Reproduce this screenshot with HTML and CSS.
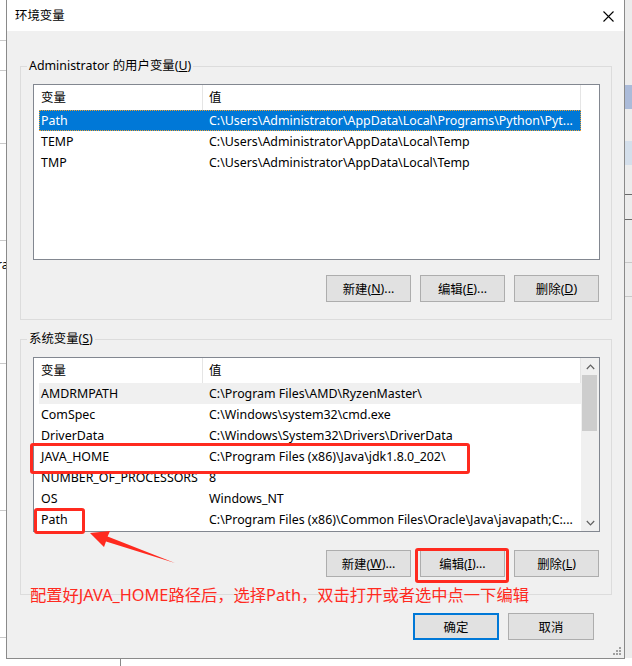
FILE: index.html
```html
<!DOCTYPE html>
<html lang="zh-CN">
<head>
<meta charset="utf-8">
<title>环境变量</title>
<link rel="stylesheet" href="styles.css">
</head>
<body>
<div class="screen">
  <div class="behind-left">
    <i class="hl" style="top:40px"></i>
    <i class="hl" style="top:70px"></i>
    <i class="hl" style="top:143px"></i>
    <i class="hl" style="top:240px"></i>
    <span class="ra">ra</span>
    <i class="hl" style="top:363px"></i>
    <i class="hl" style="top:510px"></i>
    <i class="hl" style="top:637px"></i>
  </div>
  <div class="behind-right">
    <i class="blk1"></i>
    <i class="blk2"></i>
    <i class="rl" style="top:194px"></i>
    <i class="rl" style="top:219px"></i>
    <i class="rl light" style="top:262px"></i>
    <i class="rl light" style="top:296px"></i>
  </div>
  <div class="behind-bottom"><i class="vl"></i></div>

  <div class="dialog">
    <div class="titlebar">
      <span class="title">环境变量</span>
      <svg class="close" width="11" height="11" viewBox="0 0 11 11"><path d="M0.5 0.5 L10.5 10.5 M10.5 0.5 L0.5 10.5" stroke="#000" stroke-width="1.1" fill="none"/></svg>
    </div>
    <div class="body">
      <fieldset class="group">
        <legend>Administrator 的用户变量(<u>U</u>)</legend>
        <div class="list">
          <div class="list-main">
            <div class="list-head"><div class="hcol c1">变量</div><div class="hcol c2">值</div></div>
            <div class="rows">
              <div class="row sel"><span class="c1">Path</span><span class="c2">C:\Users\Administrator\AppData\Local\Programs\Python\Pyt...</span></div>
              <div class="row"><span class="c1">TEMP</span><span class="c2">C:\Users\Administrator\AppData\Local\Temp</span></div>
              <div class="row"><span class="c1">TMP</span><span class="c2">C:\Users\Administrator\AppData\Local\Temp</span></div>
            </div>
          </div>
        </div>
        <div class="btns">
          <button class="btn">新建(<u>N</u>)...</button>
          <button class="btn">编辑(<u>E</u>)...</button>
          <button class="btn">删除(<u>D</u>)</button>
        </div>
      </fieldset>

      <fieldset class="group group-sys">
        <legend>系统变量(<u>S</u>)</legend>
        <div class="list list-sys">
          <div class="list-main">
            <div class="list-head"><div class="hcol c1">变量</div><div class="hcol c2">值</div></div>
            <div class="rows">
              <div class="row dim"><span class="c1">AMDRMPATH</span><span class="c2">C:\Program Files\AMD\RyzenMaster\</span></div>
              <div class="row"><span class="c1">ComSpec</span><span class="c2">C:\Windows\system32\cmd.exe</span></div>
              <div class="row"><span class="c1">DriverData</span><span class="c2">C:\Windows\System32\Drivers\DriverData</span></div>
              <div class="row"><span class="c1">JAVA_HOME</span><span class="c2">C:\Program Files (x86)\Java\jdk1.8.0_202\</span></div>
              <div class="row"><span class="c1">NUMBER_OF_PROCESSORS</span><span class="c2">8</span></div>
              <div class="row"><span class="c1">OS</span><span class="c2">Windows_NT</span></div>
              <div class="row"><span class="c1">Path</span><span class="c2">C:\Program Files (x86)\Common Files\Oracle\Java\javapath;C:...</span></div>
            </div>
          </div>
          <div class="scroll">
            <div class="arrow"><svg width="9" height="6" viewBox="0 0 9 6"><path d="M0.8 5 L4.5 1.2 L8.2 5" stroke="#606060" stroke-width="1.2" fill="none"/></svg></div>
            <div class="thumb"></div>
            <div class="track"></div>
            <div class="arrow"><svg width="9" height="6" viewBox="0 0 9 6"><path d="M0.8 1 L4.5 4.8 L8.2 1" stroke="#606060" stroke-width="1.2" fill="none"/></svg></div>
          </div>
        </div>
        <div class="btns btns-sys">
          <button class="btn">新建(<u>W</u>)...</button>
          <button class="btn">编辑(<u>I</u>)...</button>
          <button class="btn">删除(<u>L</u>)</button>
        </div>
      </fieldset>

      <div class="footer">
        <button class="btn btn-wide btn-default">确定</button>
        <button class="btn btn-wide">取消</button>
      </div>
    </div>
    <div class="grip">
      <svg width="8" height="8" viewBox="0 0 8 8" fill="#a0a0a0"><rect x="6" y="0" width="2" height="2"/><rect x="3" y="3" width="2" height="2"/><rect x="6" y="3" width="2" height="2"/><rect x="0" y="6" width="2" height="2"/><rect x="3" y="6" width="2" height="2"/><rect x="6" y="6" width="2" height="2"/></svg>
    </div>
  </div>

  <div class="mark mark-java"></div>
  <div class="mark mark-path"></div>
  <div class="mark mark-edit"></div>
  <svg class="arrow-mark" width="100" height="40" viewBox="85 528 100 40">
    <polygon points="90,533 110,531 107.6,536.6 175,563 106,541.4 104,547" fill="#ff2a1f"/>
  </svg>
  <div class="note">配置好JAVA_HOME路径后，选择Path，双击打开或者选中点一下编辑</div>
</div>
</body>
</html>
```

FILE: styles.css
```css
* { box-sizing: border-box; }
html, body { margin: 0; padding: 0; }
body {
  width: 632px;
  height: 666px;
  overflow: hidden;
  background: #ffffff;
  font-family: "Noto Sans", "Noto Sans CJK SC", sans-serif;
  font-size: 12.4px;
  color: #000;
}
.screen { position: relative; width: 632px; height: 666px; overflow: hidden; }

/* window behind the dialog */
.behind-left { position: absolute; left: 0; top: 0; width: 7px; height: 666px; background: #fff; }
.behind-left .hl { position: absolute; left: 0; width: 7px; height: 1px; background: #c9c9c9; }
.behind-left .ra { position: absolute; left: -3px; top: 257px; font-size: 12px; line-height: 16px; }
.behind-right { position: absolute; right: 0; top: 0; width: 8px; height: 666px; background: #ececec; }
.behind-right .blk1 { position: absolute; left: 0; top: 85px; width: 8px; height: 24px; background: #abbbd9; }
.behind-right .blk2 { position: absolute; left: 0; top: 141px; width: 8px; height: 24px; background: #d4dfeb; }
.behind-right .rl { position: absolute; left: 0; width: 8px; height: 1px; background: #6a6a6a; }
.behind-right .rl.light { background: #c8c8c8; }
.behind-bottom { position: absolute; left: 0; bottom: 0; width: 632px; height: 8px; background: #fff; }
.behind-bottom .vl { position: absolute; left: 120px; top: 0; width: 1px; height: 8px; background: #888; }

/* dialog */
.dialog {
  position: relative;
  z-index: 1;
  margin-left: 6px;
  width: 619px;
  height: 659px;
  border: 1px solid #8a8a8a;
  border-top: none;
  background: #f0f0f0;
  display: flex;
  flex-direction: column;
}
.titlebar {
  height: 31px;
  flex: none;
  background: #fff;
  display: flex;
  align-items: center;
  justify-content: space-between;
  padding: 0 10px 0 8px;
}
.title { font-size: 12.4px; line-height: 16px; }
.close { display: block; margin-top: 1px; }

.body { padding: 27px 12px 0 13px; display: flex; flex-direction: column; }

.group {
  margin: 0;
  padding: 10px 11px 17px 12px;
  border: 1px solid #dcdcdc;
  min-width: 0;
}
.group legend {
  margin-left: -6px;
  padding: 0 2px;
  font-size: 12.4px;
  line-height: 16px;
}
.group-sys { margin-top: 11px; }

.list {
  height: 176px;
  border: 1px solid #828790;
  background: #fff;
  display: flex;
}
.list-sys { height: 175px; }
.list-main { width: 547px; flex: none; }

.list-head { display: flex; height: 25px; }
.hcol { line-height: 25px; border-right: 1px solid #e5e5e5; white-space: nowrap; }
.hcol.c1 { width: 169px; padding-left: 7px; }
.hcol.c2 { flex: 1; padding-left: 6px; }

.rows { padding-left: 5px; }
.row {
  display: flex;
  width: 542px;
  height: 21px;
  line-height: 21px;
  white-space: nowrap;
  overflow: hidden;
}
.row .c1 { width: 168px; padding-left: 2px; flex: none; overflow: hidden; }
.row .c2 { padding-left: 2px; overflow: hidden; }
.row.sel { background: #0078d7; color: #fff; outline: 1px dotted #f0a030; outline-offset: -1px; }
.row.dim { background: #f0f0f0; }

.scroll { width: 18px; flex: none; background: #f0f0f0; display: flex; flex-direction: column; padding: 0 1px 0 1px; }
.scroll .arrow { height: 17px; display: flex; align-items: center; justify-content: center; }
.scroll .thumb { height: 56px; background: #cdcdcd; margin: 0 1px 0 0; }
.scroll .track { flex: 1; }

.btns { display: flex; justify-content: flex-end; gap: 9px; margin-top: 15px; padding-right: 1px; }
.btns-sys { margin-top: 18px; }
.btn {
  width: 85px;
  height: 27px;
  margin: 0;
  padding: 0;
  background: #e1e1e1;
  border: 1px solid #adadad;
  font-family: inherit;
  font-size: 12.4px;
  color: #000;
  display: flex;
  align-items: center;
  justify-content: center;
}
.btn u { text-underline-offset: 1px; }
.footer { display: flex; justify-content: flex-end; gap: 9px; margin-top: 18px; padding-right: 18px; }
.btn-wide { width: 86px; }
.btn-default { border: 2px solid #0078d7; }

.grip { position: absolute; right: 3px; bottom: 3px; line-height: 0; }

/* red annotations */
.mark { position: absolute; z-index: 2; border: 3px solid #ff2a1f; border-radius: 3px; }
.mark-java { left: 30px; top: 443px; width: 440px; height: 31px; }
.mark-path { left: 34px; top: 508px; width: 51px; height: 26px; }
.mark-edit { left: 415px; top: 548px; width: 94px; height: 35px; }
.arrow-mark { position: absolute; z-index: 2; left: 85px; top: 528px; }
.note {
  position: absolute;
  z-index: 2;
  left: 30px;
  top: 585px;
  font-size: 16.3px;
  line-height: 20px;
  color: #ff2a1f;
  white-space: nowrap;
  font-family: "Noto Sans", "Noto Sans CJK SC", sans-serif;
}
```
